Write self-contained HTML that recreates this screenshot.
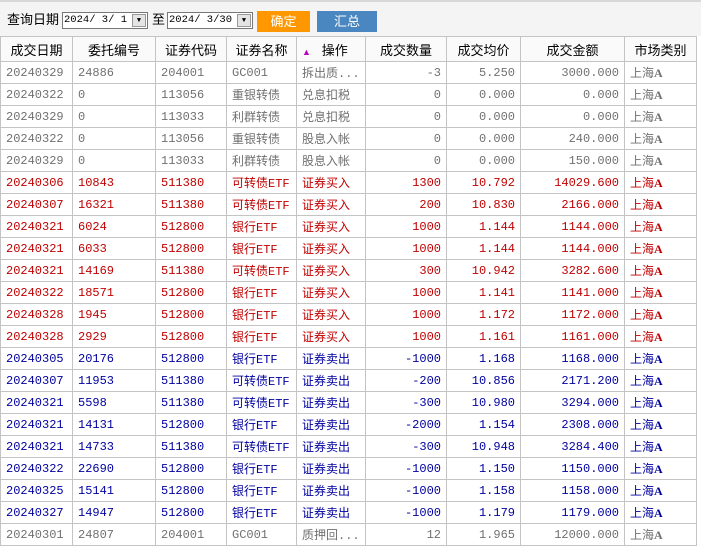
<!DOCTYPE html><html><head><meta charset="utf-8"><style>
body{margin:0;width:701px;height:547px;overflow:hidden;background:#fff;font-family:"Liberation Sans","Noto Sans CJK SC",sans-serif;font-size:12px}
.top{position:absolute;left:0;top:0;width:701px;height:36px;background:#f4f4f4;border-top:2px solid #d8d8d8;box-sizing:border-box}
.lbl{position:absolute;top:9px;font-size:13px;line-height:17px;color:#000}
.sel{position:absolute;top:10px;height:17px;border:1px solid #777;background:#fff;font-family:"Liberation Mono",monospace;font-size:10.5px;line-height:15px;box-sizing:border-box;padding-left:1px;white-space:pre;overflow:hidden}
.sel i{position:absolute;right:1px;top:1px;width:14px;height:13px;background:#e4e4e4;border:1px solid #999;box-sizing:border-box;font-style:normal;font-size:7px;text-align:center;line-height:12px}
.btn{position:absolute;top:9px;height:21px;color:#fff;font-size:13px;text-align:center;line-height:21px}
table{position:absolute;left:0;top:36px;border-collapse:collapse;table-layout:fixed;width:696px}
td,th{border:1px solid #c4c4c4;height:21px;padding:0 5px;white-space:nowrap;overflow:hidden;font-weight:normal;font-size:12px}
td{font-family:"Liberation Mono","Noto Sans CJK SC",monospace}
th{height:24px;font-size:13px;text-align:center;background:#fafafa}
td.r{text-align:right}
tr.g td{color:#707070}tr.R td{color:#c00000}tr.B td{color:#0000a0}
b{font-family:"Liberation Serif",serif;font-weight:bold}
</style></head><body>
<div class="top">
<span class="lbl" style="left:7px">查询日期</span>
<div class="sel" style="left:62px;width:86px">2024/ 3/ 1<i>▼</i></div>
<span class="lbl" style="left:152px">至</span>
<div class="sel" style="left:167px;width:86px">2024/ 3/30<i>▼</i></div>
<div class="btn" style="left:257px;width:53px;background:#ff9800">确定</div>
<div class="btn" style="left:317px;width:60px;background:#4a86c0">汇总</div>
</div>
<table>
<colgroup><col style="width:72px"><col style="width:83px"><col style="width:71px"><col style="width:70px"><col style="width:69px"><col style="width:81px"><col style="width:74px"><col style="width:104px"><col style="width:72px"></colgroup>
<tr><th>成交日期</th><th>委托编号</th><th>证券代码</th><th>证券名称</th><th style="text-align:left"><span style="color:#c000c0;font-size:9px">▲</span>&nbsp;&nbsp;&nbsp;操作</th><th>成交数量</th><th>成交均价</th><th>成交金额</th><th>市场类别</th></tr>
<tr class="g"><td>20240329</td><td>24886</td><td>204001</td><td>GC001</td><td>拆出质...</td><td class="r">-3</td><td class="r">5.250</td><td class="r">3000.000</td><td>上海<b>A</b></td></tr>
<tr class="g"><td>20240322</td><td>0</td><td>113056</td><td>重银转债</td><td>兑息扣税</td><td class="r">0</td><td class="r">0.000</td><td class="r">0.000</td><td>上海<b>A</b></td></tr>
<tr class="g"><td>20240329</td><td>0</td><td>113033</td><td>利群转债</td><td>兑息扣税</td><td class="r">0</td><td class="r">0.000</td><td class="r">0.000</td><td>上海<b>A</b></td></tr>
<tr class="g"><td>20240322</td><td>0</td><td>113056</td><td>重银转债</td><td>股息入帐</td><td class="r">0</td><td class="r">0.000</td><td class="r">240.000</td><td>上海<b>A</b></td></tr>
<tr class="g"><td>20240329</td><td>0</td><td>113033</td><td>利群转债</td><td>股息入帐</td><td class="r">0</td><td class="r">0.000</td><td class="r">150.000</td><td>上海<b>A</b></td></tr>
<tr class="R"><td>20240306</td><td>10843</td><td>511380</td><td>可转债ETF</td><td>证券买入</td><td class="r">1300</td><td class="r">10.792</td><td class="r">14029.600</td><td>上海<b>A</b></td></tr>
<tr class="R"><td>20240307</td><td>16321</td><td>511380</td><td>可转债ETF</td><td>证券买入</td><td class="r">200</td><td class="r">10.830</td><td class="r">2166.000</td><td>上海<b>A</b></td></tr>
<tr class="R"><td>20240321</td><td>6024</td><td>512800</td><td>银行ETF</td><td>证券买入</td><td class="r">1000</td><td class="r">1.144</td><td class="r">1144.000</td><td>上海<b>A</b></td></tr>
<tr class="R"><td>20240321</td><td>6033</td><td>512800</td><td>银行ETF</td><td>证券买入</td><td class="r">1000</td><td class="r">1.144</td><td class="r">1144.000</td><td>上海<b>A</b></td></tr>
<tr class="R"><td>20240321</td><td>14169</td><td>511380</td><td>可转债ETF</td><td>证券买入</td><td class="r">300</td><td class="r">10.942</td><td class="r">3282.600</td><td>上海<b>A</b></td></tr>
<tr class="R"><td>20240322</td><td>18571</td><td>512800</td><td>银行ETF</td><td>证券买入</td><td class="r">1000</td><td class="r">1.141</td><td class="r">1141.000</td><td>上海<b>A</b></td></tr>
<tr class="R"><td>20240328</td><td>1945</td><td>512800</td><td>银行ETF</td><td>证券买入</td><td class="r">1000</td><td class="r">1.172</td><td class="r">1172.000</td><td>上海<b>A</b></td></tr>
<tr class="R"><td>20240328</td><td>2929</td><td>512800</td><td>银行ETF</td><td>证券买入</td><td class="r">1000</td><td class="r">1.161</td><td class="r">1161.000</td><td>上海<b>A</b></td></tr>
<tr class="B"><td>20240305</td><td>20176</td><td>512800</td><td>银行ETF</td><td>证券卖出</td><td class="r">-1000</td><td class="r">1.168</td><td class="r">1168.000</td><td>上海<b>A</b></td></tr>
<tr class="B"><td>20240307</td><td>11953</td><td>511380</td><td>可转债ETF</td><td>证券卖出</td><td class="r">-200</td><td class="r">10.856</td><td class="r">2171.200</td><td>上海<b>A</b></td></tr>
<tr class="B"><td>20240321</td><td>5598</td><td>511380</td><td>可转债ETF</td><td>证券卖出</td><td class="r">-300</td><td class="r">10.980</td><td class="r">3294.000</td><td>上海<b>A</b></td></tr>
<tr class="B"><td>20240321</td><td>14131</td><td>512800</td><td>银行ETF</td><td>证券卖出</td><td class="r">-2000</td><td class="r">1.154</td><td class="r">2308.000</td><td>上海<b>A</b></td></tr>
<tr class="B"><td>20240321</td><td>14733</td><td>511380</td><td>可转债ETF</td><td>证券卖出</td><td class="r">-300</td><td class="r">10.948</td><td class="r">3284.400</td><td>上海<b>A</b></td></tr>
<tr class="B"><td>20240322</td><td>22690</td><td>512800</td><td>银行ETF</td><td>证券卖出</td><td class="r">-1000</td><td class="r">1.150</td><td class="r">1150.000</td><td>上海<b>A</b></td></tr>
<tr class="B"><td>20240325</td><td>15141</td><td>512800</td><td>银行ETF</td><td>证券卖出</td><td class="r">-1000</td><td class="r">1.158</td><td class="r">1158.000</td><td>上海<b>A</b></td></tr>
<tr class="B"><td>20240327</td><td>14947</td><td>512800</td><td>银行ETF</td><td>证券卖出</td><td class="r">-1000</td><td class="r">1.179</td><td class="r">1179.000</td><td>上海<b>A</b></td></tr>
<tr class="g"><td>20240301</td><td>24807</td><td>204001</td><td>GC001</td><td>质押回...</td><td class="r">12</td><td class="r">1.965</td><td class="r">12000.000</td><td>上海<b>A</b></td></tr>
</table>
</body></html>
